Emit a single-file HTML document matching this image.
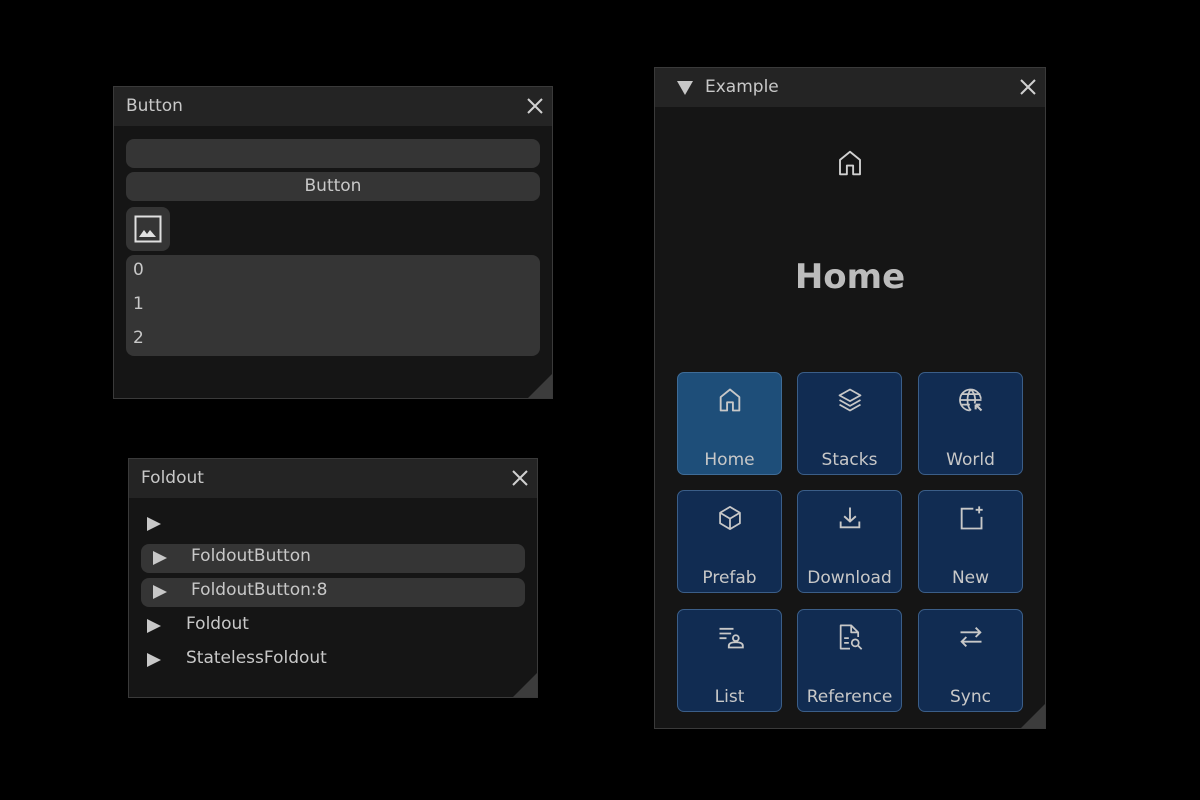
<!DOCTYPE html>
<html><head><meta charset="utf-8"><style>
*{box-sizing:border-box;margin:0;padding:0}
body{width:1200px;height:800px;background:#000;position:relative;overflow:hidden;font-family:"DejaVu Sans","Liberation Sans",sans-serif;color:#c4c4c4}
.win{position:absolute;background:#151515;border:1px solid #3a3a3a}
.tb{position:absolute;left:0;top:0;right:0;height:39px;background:#242424}
.tt{position:absolute;top:9px;font-size:17px;color:#c8c8c8}
.x{position:absolute;top:10px;width:18px;height:18px}
.grip{position:absolute;right:0;bottom:0;width:0;height:0;border-left:24px solid transparent;border-bottom:24px solid #3c3c3c}
.btn{position:absolute;background:#353535;border-radius:8px}
.abs{position:absolute}
.tile{position:absolute;width:105px;height:103px;background:#112c52;border:1px solid #3b5e88;border-radius:7px}
.tile svg{position:absolute;left:38px;top:13px;width:28px;height:28px}
.tile span{position:absolute;left:0;right:0;top:77px;text-align:center;font-size:17px;color:#c8c8c8;font-weight:500}
.tri{position:absolute;width:0;height:0;border-top:7px solid transparent;border-bottom:7px solid transparent;border-left:14px solid #c8c8c8}
.fl{position:absolute;font-size:17px;color:#c8c8c8}
</style></head><body>

<!-- Button window -->
<div class="win" style="left:113px;top:86px;width:440px;height:313px">
 <div class="tb"></div>
 <div class="tt" style="left:12px">Button</div>
 <svg class="x" style="left:412px" viewBox="0 0 18 18"><path d="M2 2L16 16M16 2L2 16" stroke="#d0d0d0" stroke-width="2"/></svg>
 <div class="btn" style="left:12px;top:52px;width:414px;height:29px"></div>
 <div class="btn" style="left:12px;top:85px;width:414px;height:29px;text-align:center;font-size:17px;line-height:28px;color:#c8c8c8">Button</div>
 <div class="btn" style="left:12px;top:120px;width:44px;height:44px"></div>
 <svg class="abs" style="left:20px;top:128px" width="28" height="28" viewBox="0 0 28 28"><rect x="1.5" y="1.5" width="25" height="25" fill="none" stroke="#e0e0e0" stroke-width="2"/><path d="M5 22L10 15L13 19L16 15L22 22Z" fill="#e0e0e0"/></svg>
 <div class="btn" style="left:12px;top:168px;width:414px;height:101px"></div>
 <div class="fl" style="left:19px;top:173px">0</div>
 <div class="fl" style="left:19px;top:207px">1</div>
 <div class="fl" style="left:19px;top:241px">2</div>
 <div class="grip"></div>
</div>

<!-- Foldout window -->
<div class="win" style="left:128px;top:458px;width:410px;height:240px">
 <div class="tb"></div>
 <div class="tt" style="left:12px">Foldout</div>
 <svg class="x" style="left:382px" viewBox="0 0 18 18"><path d="M2 2L16 16M16 2L2 16" stroke="#d0d0d0" stroke-width="2"/></svg>
 <div class="tri" style="left:18px;top:58px"></div>
 <div class="btn" style="left:12px;top:85px;width:384px;height:29px"></div>
 <div class="tri" style="left:24px;top:92px"></div>
 <div class="fl" style="left:62px;top:87px">FoldoutButton</div>
 <div class="btn" style="left:12px;top:119px;width:384px;height:29px"></div>
 <div class="tri" style="left:24px;top:126px"></div>
 <div class="fl" style="left:62px;top:121px">FoldoutButton:8</div>
 <div class="tri" style="left:18px;top:160px"></div>
 <div class="fl" style="left:57px;top:155px">Foldout</div>
 <div class="tri" style="left:18px;top:194px"></div>
 <div class="fl" style="left:57px;top:189px">StatelessFoldout</div>
 <div class="grip"></div>
</div>

<!-- Example window -->
<div class="win" style="left:654px;top:67px;width:392px;height:662px">
 <div class="tb"></div>
 <div class="abs" style="left:22px;top:13px;width:0;height:0;border-left:8px solid transparent;border-right:8px solid transparent;border-top:14px solid #c8c8c8"></div>
 <div class="tt" style="left:50px">Example</div>
 <svg class="x" style="left:364px" viewBox="0 0 18 18"><path d="M2 2L16 16M16 2L2 16" stroke="#d0d0d0" stroke-width="2"/></svg>
 <svg class="abs" style="left:180px;top:80px" width="30" height="30" viewBox="0 0 24 24"><path d="M4 21V9.5L12 3L20 9.5V21H14.5V14H9.5V21Z" fill="none" stroke="#d0d0d0" stroke-width="1.5" stroke-linejoin="round"/></svg>
 <div class="abs" style="left:0;right:0;top:189px;text-align:center;font-size:34px;color:#bcbcbc;font-weight:bold">Home</div>

 <div class="tile" style="left:22px;top:304px;background:#1e4e79;border-color:#3f6c97">
  <svg viewBox="0 0 24 24"><path d="M4 21V9.5L12 3L20 9.5V21H14.5V14H9.5V21Z" fill="none" stroke="#c8c8c8" stroke-width="1.6" stroke-linejoin="round"/></svg><span>Home</span></div>
 <div class="tile" style="left:142px;top:304px">
  <svg viewBox="0 0 24 24" fill="none" stroke="#c8c8c8" stroke-width="1.5" stroke-linejoin="round"><path d="M12 3L21 8L12 13L3 8Z"/><path d="M3 12L12 17L21 12"/><path d="M3 16L12 21L21 16"/></svg><span>Stacks</span></div>
 <div class="tile" style="left:263px;top:304px">
  <svg viewBox="0 0 24 24" fill="none" stroke="#c8c8c8" stroke-width="1.5"><path d="M20.5 11A9 9 0 1 0 11 21"/><path d="M3 12H21M12 3C8 7 8 17 12 21M12 3C16 7 16 13 15 15M4 7H20M4 16H11"/><path d="M16 16L21 21M16 16V20M16 16H20" stroke-width="1.8"/></svg><span>World</span></div>

 <div class="tile" style="left:22px;top:422px">
  <svg viewBox="0 0 24 24" fill="none" stroke="#c8c8c8" stroke-width="1.5" stroke-linejoin="round"><path d="M12 2.5L20.5 7.5V16.5L12 21.5L3.5 16.5V7.5Z"/><path d="M3.5 7.5L12 12.5L20.5 7.5M12 12.5V21.5"/></svg><span>Prefab</span></div>
 <div class="tile" style="left:142px;top:422px">
  <svg viewBox="0 0 24 24" fill="none" stroke="#c8c8c8" stroke-width="1.6"><path d="M12 3V15M7 10.5L12 15L17 10.5M4 15V20H20V15"/></svg><span>Download</span></div>
 <div class="tile" style="left:263px;top:422px">
  <svg viewBox="0 0 24 24" fill="none" stroke="#c8c8c8" stroke-width="1.6"><path d="M14 4H4V21H21V11"/><path d="M19 2V8M16 5H22"/></svg><span>New</span></div>

 <div class="tile" style="left:22px;top:541px">
  <svg viewBox="0 0 24 24" fill="none" stroke="#c8c8c8" stroke-width="1.6"><path d="M3 5H15M3 9H13M3 13H9"/><circle cx="17" cy="13" r="2.5"/><path d="M11 21V19.5C11 17.5 13 16.5 17 16.5S23 17.5 23 19.5V21Z"/></svg><span>List</span></div>
 <div class="tile" style="left:142px;top:541px">
  <svg viewBox="0 0 24 24" fill="none" stroke="#c8c8c8" stroke-width="1.5" stroke-linejoin="round"><path d="M12 22H4V2H13L19 8V12"/><path d="M13 2V8H19"/><path d="M7 13H11M7 17H11"/><circle cx="16.5" cy="17" r="3"/><path d="M18.7 19.2L22 22.5"/></svg><span>Reference</span></div>
 <div class="tile" style="left:263px;top:541px">
  <svg viewBox="0 0 24 24" fill="none" stroke="#c8c8c8" stroke-width="1.6"><path d="M3 8H20M16 4L20 8L16 12"/><path d="M21 16H4M8 12L4 16L8 20"/></svg><span>Sync</span></div>
 <div class="grip"></div>
</div>
</body></html>
